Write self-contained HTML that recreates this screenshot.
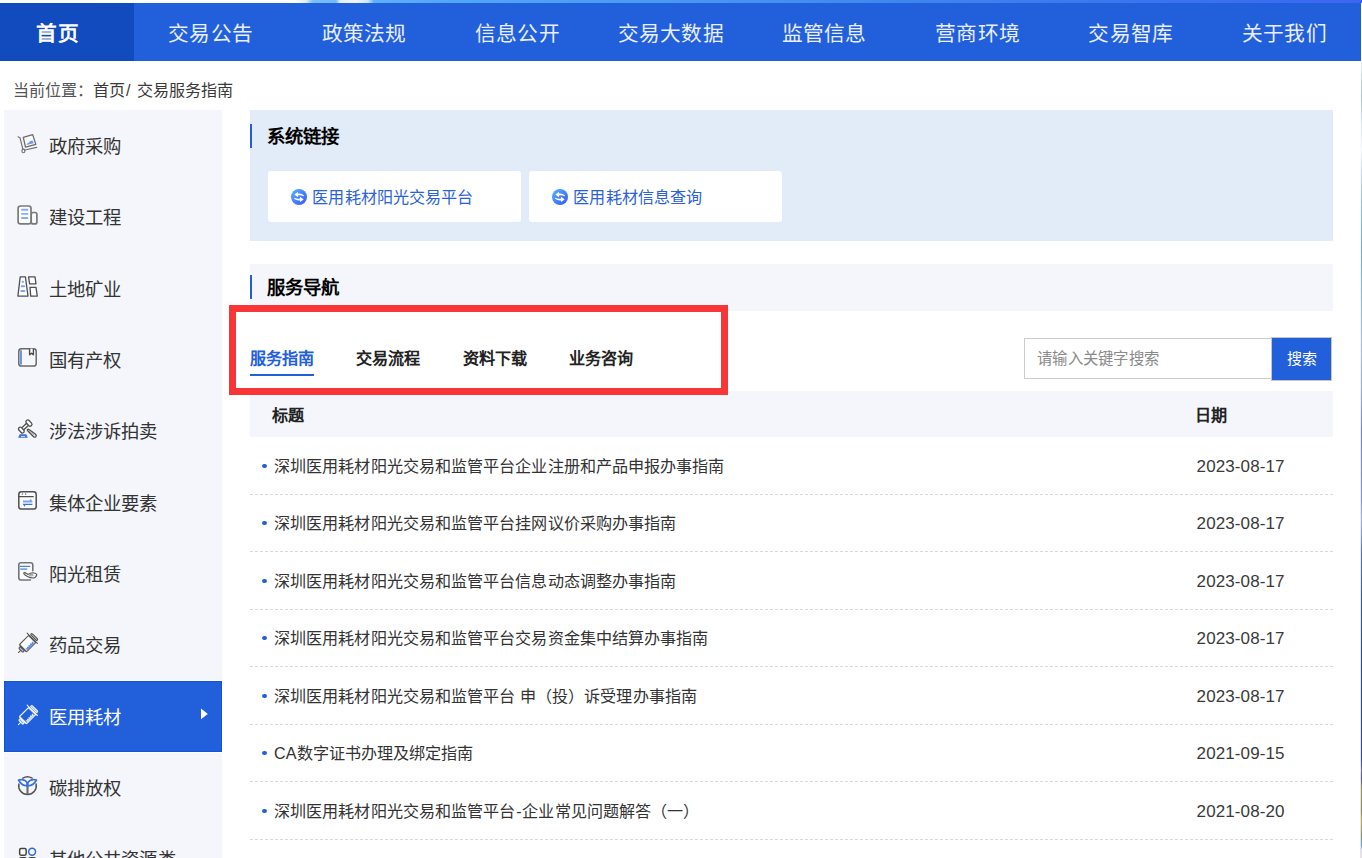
<!DOCTYPE html>
<html lang="zh-CN">
<head>
<meta charset="utf-8">
<title>交易服务指南</title>
<style>
*{box-sizing:border-box;margin:0;padding:0}
html,body{width:1362px;height:858px;overflow:hidden;background:#fff}
body{position:relative;font-family:"Liberation Sans",sans-serif;color:#333;-webkit-font-smoothing:antialiased}
.abs{position:absolute}
/* top banner sliver */
#strip{left:0;top:0;width:1362px;height:3px;background:linear-gradient(90deg,#fefeff 0,#fdfeff 294px,#dfedfd 306px,#7cbcfa 313px,#74b8fa 336px,#e4f0fe 340px,#eef6ff 356px,#cfe5fd 368px,#5cb0fc 374px,#52a6f6 450px,#4797f2 700px,#3f86ee 900px,#3a74ee 1150px,#3d66f0 1362px)}
/* right edge sliver */
#edge{left:1361px;top:61px;width:1px;height:797px;background:linear-gradient(180deg,#f2f5fc 0px,#c8d8f6 14px,#a8c4f4 39px,#dfe8fa 64px,#f4f6fd 89px,#c4d8f8 114px,#8ab8f4 149px,#6aa8f0 189px,#90b8f0 239px,#a8c0ec 289px,#90a4e0 339px,#7080d0 369px,#7484d0 389px,#8098d8 439px,#a0b8e8 459px,#5878c0 489px,#3458a0 539px,#284c90 589px,#2a4a8c 659px,#3c4a88 699px,#8078a0 709px,#5a5880 717px,#a09850 729px,#8c8848 749px,#c8b050 759px,#8c9060 774px,#60a0d0 784px,#e8d8e0 789px,#f0e0e0 797px)}
#edge2{left:1360px;top:61px;width:1px;height:797px;background:linear-gradient(180deg,#fff 0,#f3f6fc 30%,#e6ebf6 60%,#e0e4f0 100%)}
/* nav */
#nav{left:0;top:3px;width:1361px;height:58px;background:#2260db;display:flex}
#nav div{height:58px;line-height:61px;text-align:center;color:#e9effc;font-size:20.7px;width:153.375px;white-space:nowrap;letter-spacing:.25px}
#nav div.home{width:134px;background:#124bbd;font-weight:bold;color:#fff;padding-right:19px;line-height:62px}
/* breadcrumb */
#crumb{left:13px;top:79px;height:22px;line-height:22px;font-size:16.1px;color:#555;white-space:nowrap}
#crumb b{font-weight:normal;color:#3a3a3a}
#crumb u{text-decoration:none;display:inline-block;width:12px;text-align:left;padding-left:1px}
/* sidebar */
#side{left:4px;top:110px;width:218px;height:748px;background:#f4f6fb}
.si{position:absolute;left:0;width:218px;height:71.3px}
.si span{position:absolute;left:45px;top:0;height:71.3px;line-height:74px;font-size:18.35px;letter-spacing:.1px;color:#333;white-space:nowrap}
.si svg{position:absolute;left:8px;top:18px;width:32px;height:32px;overflow:visible}
.si.on{background:#2260db;box-shadow:inset 0 0 0 1px #1253d9,0 -1px 0 #fff,0 1px 0 #fff}
.si.on span{color:#fff}
/* panels */
#p1{left:250px;top:110px;width:1083px;height:130.5px;background:#e2ebf8}
#p2{left:250px;top:264px;width:1083px;height:47px;background:#f4f6fb}
.bar{position:absolute;left:0;width:2px;height:24px;background:#2260db}
.pt{position:absolute;left:17px;font-size:18.4px;font-weight:bold;color:#000;line-height:26px;white-space:nowrap}
.lk{position:absolute;top:61px;width:253px;height:51px;background:#fff;border-radius:3px}
.lk span{position:absolute;left:44.4px;top:0;line-height:53px;font-size:16.1px;letter-spacing:.09px;color:#2b62d9;white-space:nowrap}
.lk svg{position:absolute;left:23px;top:18px;width:16px;height:16px}
/* tabs */
.tab{position:absolute;top:346px;height:24px;line-height:24px;font-size:16.1px;font-weight:bold;color:#222;white-space:nowrap}
.tab.on{color:#2260db}
#ul{left:250px;top:374px;width:64px;height:2px;background:#2260db}
#red{left:229px;top:305px;width:499px;height:90px;border:7px solid #f83637}
/* search */
#inp{left:1024px;top:338px;width:249px;height:41px;border:1px solid #ccc;background:#fff;font-size:15.4px;color:#8a8a8a;line-height:39px;padding-left:12px;white-space:nowrap;letter-spacing:.25px}
#btn{left:1271px;top:337px;width:61px;height:44px;background:#2260db;border:1px solid #c9c6c0;color:#fff;font-size:15px;line-height:42px;text-align:center;white-space:nowrap}
/* table */
#th{left:250px;top:391px;width:1083px;height:46px;background:#f4f6fb}
#th span{position:absolute;top:0;line-height:48px;font-size:16.1px;font-weight:bold;color:#222}
.row{position:absolute;left:250px;width:1083px;height:58px}
.row::after{content:"";position:absolute;left:0;bottom:0;width:1083px;height:1px;background:repeating-linear-gradient(90deg,#d9d9d9 0,#d9d9d9 3px,transparent 3px,transparent 5px)}
.row i{position:absolute;left:12px;top:26.5px;width:5.2px;height:4.8px;border-radius:50%;background:#2260db}
.row span{position:absolute;left:24px;top:0;line-height:59px;font-size:16.1px;letter-spacing:.09px;color:#333;white-space:nowrap}
.row em{position:absolute;left:946.6px;top:0;line-height:59px;font-size:17px;font-style:normal;color:#3a3a3a;white-space:nowrap;letter-spacing:.1px}
.row span b{font-weight:normal;padding:0 .8px}
</style>
</head>
<body>
<div id="strip" class="abs"></div>
<div id="nav" class="abs"><div class="home">首页</div><div>交易公告</div><div>政策法规</div><div>信息公开</div><div>交易大数据</div><div>监管信息</div><div>营商环境</div><div>交易智库</div><div>关于我们</div></div>
<div id="edge2" class="abs"></div>
<div id="edge" class="abs"></div>
<div id="crumb" class="abs">当前位置：<b>首页<u>/</u>交易服务指南</b></div>
<div id="side" class="abs">
<div class="si" style="top:0.0px"><svg viewBox="0 0 32 32" ><g fill="none" stroke="#727272" stroke-width="1.2" stroke-linecap="round" stroke-linejoin="round"><path d="M6.1 8.8 L8 9.7 L10.9 21.3"/><ellipse cx="11.4" cy="22.9" rx="1.45" ry="1.85"/><path d="M13 22 L24.7 19.4"/><path d="M11.3 9.3 L20.7 6.6 L23.8 16.4 L13.5 19.2 Z" fill="#fbfcfe" stroke="#6a6a6a" stroke-width="1.3"/></g><path d="M14.3 17.1 L15.7 15 L17.3 14.6 L17.7 13.3 L20.6 12.4 L21.8 15.2 Z" fill="#6f9aeb"/></svg><span>政府采购</span></div>
<div class="si" style="top:71.3px"><svg viewBox="0 0 32 32" ><g fill="#fbfcfe" stroke="#7a7a7a" stroke-width="1.7" stroke-linejoin="round"><rect x="19.2" y="13.5" width="5.7" height="11.4" rx="2"/><rect x="6.1" y="7" width="12.9" height="17.9" rx="2.4"/></g><g stroke="#8caeee" stroke-width="1.9" stroke-linecap="round"><path d="M9.9 10.8H15.4M9.9 14.9H15.4M9.9 19H15.4"/></g></svg><span>建设工程</span></div>
<div class="si" style="top:142.6px"><svg viewBox="0 0 32 32" ><g fill="#fbfcfe" stroke="#505050" stroke-width="1.3" stroke-linejoin="round"><path d="M8.2 5.9 L13.4 5.9 L16 25.1 L5.9 25.1 Z"/><path d="M16.6 5.9 L23 5.9 L24 12.9 L17.6 12.9 Z"/><path d="M18 16.4 L24 16.4 L25.3 25.1 L18.7 25.1 Z"/></g><circle cx="10.8" cy="10.8" r="1.15" fill="#7fa3ec"/><g stroke="#7fa3ec" stroke-width="1.9" stroke-linecap="round"><path d="M9.6 15.3H12.2M9.4 20H12.4"/></g></svg><span>土地矿业</span></div>
<div class="si" style="top:213.9px"><svg viewBox="0 0 32 32" ><rect x="6.8" y="6.8" width="17.4" height="17.3" rx="2.6" fill="#fbfcfe" stroke="#686868" stroke-width="1.5"/><rect x="9.4" y="9.4" width="13" height="12.6" fill="#f4f6fb"/><rect x="8" y="8.2" width="2" height="14.4" fill="#6c95e9"/><path d="M17.6 6.8 V12.7 L19.5 11.2 L21.4 12.7 V6.8" fill="#fff" stroke="#4a4a4a" stroke-width="1.4" stroke-linejoin="round"/></svg><span>国有产权</span></div>
<div class="si" style="top:285.2px"><svg viewBox="0 0 32 32" ><g fill="#fbfcfe" stroke="#4f4f4f" stroke-width="1.3" stroke-linejoin="round" stroke-linecap="round"><g transform="translate(13.1 13.6) rotate(-43)"><rect x="-3.4" y="-1.45" width="6.8" height="2.9"/><rect x="-6.9" y="-3.3" width="3.5" height="6.6" rx="1.6"/><rect x="3.4" y="-3.5" width="3.7" height="7" rx="1.7"/></g><path d="M15.6 16.5 Q16.3 15.8 17 16.4 L23.6 21.3 Q24.9 22.8 23.8 23.8 Q22.7 24.7 21.3 23.5 L15.5 17.5 Q15.1 17 15.6 16.5 Z"/></g><path d="M16.8 17.5 L22.4 22.4" stroke="#8a8a8a" stroke-width="0.8" fill="none"/><path d="M7.7 21.3 H14.2 L15.9 24.8 H6.1 Z" fill="#3b6fe2"/><rect x="9" y="23" width="4" height="0.9" fill="#dfe8fb"/></svg><span>涉法涉诉拍卖</span></div>
<div class="si" style="top:356.5px"><svg viewBox="0 0 32 32" ><rect x="6.8" y="6.8" width="17.4" height="17.3" rx="2.6" fill="#fbfcfe" stroke="#4f4f4f" stroke-width="1.5"/><path d="M6.8 11.6 H21.2" stroke="#4f4f4f" stroke-width="1.4" stroke-linecap="round"/><circle cx="10.4" cy="9.1" r="0.75" fill="#666"/><circle cx="13.6" cy="9.1" r="0.75" fill="#666"/><path d="M11 15.5 H17.5 L18.5 13.8 L20.4 16.2 V17.4 H11 Z" fill="#7fa3ec"/><path d="M10.6 18.8 H20.4 V20 H13.4 L12.5 21.8 Z" fill="#3b6fe2"/></svg><span>集体企业要素</span></div>
<div class="si" style="top:427.8px"><svg viewBox="0 0 32 32" ><path d="M20.8 14.8 V9 Q20.8 6.8 18.6 6.8 H9 Q6.8 6.8 6.8 9 V21.8 Q6.8 24 9 24 H18.4" fill="#fbfcfe" stroke="#747474" stroke-width="1.6" stroke-linecap="round"/><path d="M8.3 10.4 H17.7" stroke="#4f80e6" stroke-width="1.2" stroke-linecap="round"/><path d="M8.9 13.1 H14.5" stroke="#7fa3ec" stroke-width="1.9" stroke-linecap="round"/><path d="M11.7 17 L12.9 16.4 L16.1 18.4 Q18.2 16.7 21 16.7 Q24 17 24.8 18.6 Q24 21.6 21.4 22 Q18 22 15.4 20.5 L12.4 18.6 Z" fill="#fbfcfe" stroke="#575757" stroke-width="1.15" stroke-linejoin="round"/><ellipse cx="19.2" cy="19.2" rx="2" ry="0.7" fill="none" stroke="#777" stroke-width="0.8"/></svg><span>阳光租赁</span></div>
<div class="si" style="top:499.1px"><svg viewBox="0 0 32 32" ><g transform="translate(16 16) rotate(-45)" fill="#fbfcfe" stroke="#525252" stroke-width="1.05" stroke-linejoin="round" stroke-linecap="round"><path d="M-13.5 0 H-10.4" /><rect x="-10.3" y="-3" width="2.3" height="6" rx="1.1" fill="#c4c4c4"/><path d="M-7.6 -4 V4" /><rect x="-7" y="-4.9" width="12.6" height="10.1"/><path d="M6.3 -7.6 V7"/><rect x="7.7" y="-4.3" width="1.9" height="8.8" rx="0.95" fill="#c4c4c4"/><path d="M-5.6 4.5 V2.2 Q-5 1.2 -4.4 3.4 Q-3.4 0.6 -2.4 3.4 Q-1.2 0.4 -0.2 3.4 Q1.2 0.2 2.2 3.4 Q3.4 0.8 4.2 2.4 V4.5 Z" fill="#5c8ae8" stroke="none"/></g></svg><span>药品交易</span></div>
<div class="si on" style="top:571px;height:71px"><svg viewBox="0 0 32 32" ><g transform="translate(16 16) rotate(-45)" fill="none" stroke="#eef3fe" stroke-width="1.15" stroke-linejoin="round" stroke-linecap="round"><path d="M-13.5 0 H-10.4" /><rect x="-10.3" y="-3" width="2.3" height="6" rx="1.1" fill="#8fb0ee"/><path d="M-7.6 -4 V4" /><rect x="-7" y="-4.9" width="12.6" height="10.1"/><path d="M6.3 -7.6 V7"/><rect x="7.7" y="-4.3" width="1.9" height="8.8" rx="0.95" fill="#8fb0ee"/><path d="M-5.6 4.5 V2.2 Q-5 1.2 -4.4 3.4 Q-3.4 0.6 -2.4 3.4 Q-1.2 0.4 -0.2 3.4 Q1.2 0.2 2.2 3.4 Q3.4 0.8 4.2 2.4 V4.5 Z" fill="#dbe6fc" stroke="none"/></g></svg><span>医用耗材</span></div>
<div class="si" style="top:641.7px"><svg viewBox="0 0 32 32" ><g fill="none" stroke="#555" stroke-width="1.5" stroke-linecap="round"><path d="M10.9 8.1 A8.8 8.8 0 0 1 20.1 8.1"/><path d="M6.9 13.9 A8.8 8.8 0 1 0 24.1 13.9"/></g><path d="M15.5 16 V24.2" stroke="#6a6a6a" stroke-width="2.1"/><g fill="#f9fafd" stroke="#3b6fe2" stroke-width="1.7" stroke-linejoin="round"><path d="M15.5 15.7 Q10 16.2 6.5 10 Q12.6 8.5 15.5 13.1 Z"/><path d="M15.5 15.7 Q21 16.2 24.5 10 Q18.4 8.5 15.5 13.1 Z"/></g><path d="M15.5 12.9 V16.6" stroke="#3b6fe2" stroke-width="2.3"/></svg><span>碳排放权</span></div>
<div class="si" style="top:713.0px"><svg viewBox="0 0 32 32" ><rect x="7.65" y="7.55" width="6.5" height="6.6" rx="1.4" fill="#fbfcfe" stroke="#444" stroke-width="1.5"/><circle cx="20.1" cy="10.7" r="3.45" fill="none" stroke="#2f66e0" stroke-width="1.5"/><rect x="7.65" y="16.75" width="6.5" height="6.6" rx="1.4" fill="#fbfcfe" stroke="#444" stroke-width="1.5"/><rect x="16.85" y="16.75" width="6.5" height="6.6" rx="1.4" fill="#fbfcfe" stroke="#444" stroke-width="1.5"/></svg><span>其他公共资源类</span></div>
</div>
<div id="p1" class="abs">
  <div class="bar" style="top:14px"></div>
  <div class="pt" style="top:14px">系统链接</div>
  <div class="lk" style="left:18px"><svg viewBox="0 0 16 16"><defs><linearGradient id="lg" x1="0.1" y1="0.1" x2="0.9" y2="0.9"><stop offset="0" stop-color="#55aafb"/><stop offset="1" stop-color="#3a5ff8"/></linearGradient></defs><circle cx="8" cy="8" r="8" fill="url(#lg)"/><path d="M3.3 5.6 L7 2.9 V4.6 Q11 4.3 13.1 6.6 L12.4 7.2 Q10.5 6 7 6.4 V8.3 Z M12.7 10.4 L9 13.1 V11.4 Q5 11.7 2.9 9.4 L3.6 8.8 Q5.5 10 9 9.6 V7.7 Z" fill="#fff"/></svg><span>医用耗材阳光交易平台</span></div>
  <div class="lk" style="left:279px"><svg viewBox="0 0 16 16"><defs><linearGradient id="lg2" x1="0.1" y1="0.1" x2="0.9" y2="0.9"><stop offset="0" stop-color="#55aafb"/><stop offset="1" stop-color="#3a5ff8"/></linearGradient></defs><circle cx="8" cy="8" r="8" fill="url(#lg2)"/><path d="M3.3 5.6 L7 2.9 V4.6 Q11 4.3 13.1 6.6 L12.4 7.2 Q10.5 6 7 6.4 V8.3 Z M12.7 10.4 L9 13.1 V11.4 Q5 11.7 2.9 9.4 L3.6 8.8 Q5.5 10 9 9.6 V7.7 Z" fill="#fff"/></svg><span>医用耗材信息查询</span></div>
</div>
<div id="p2" class="abs">
  <div class="bar" style="top:11px"></div>
  <div class="pt" style="top:11px">服务导航</div>
</div>
<div class="tab on" style="left:250px">服务指南</div>
<div class="tab" style="left:356px">交易流程</div>
<div class="tab" style="left:463px">资料下载</div>
<div class="tab" style="left:569px">业务咨询</div>
<div id="ul" class="abs"></div>
<div id="inp" class="abs">请输入关键字搜索</div>
<div id="btn" class="abs">搜索</div>
<div id="th" class="abs"><span style="left:22px">标题</span><span style="left:945px">日期</span></div>
<div class="row" style="top:437px"><i></i><span>深圳医用耗材阳光交易和监管平台企业注册和产品申报办事指南</span><em>2023-08-17</em></div>
<div class="row" style="top:494px"><i></i><span>深圳医用耗材阳光交易和监管平台挂网议价采购办事指南</span><em>2023-08-17</em></div>
<div class="row" style="top:552px"><i></i><span>深圳医用耗材阳光交易和监管平台信息动态调整办事指南</span><em>2023-08-17</em></div>
<div class="row" style="top:609px"><i></i><span>深圳医用耗材阳光交易和监管平台交易资金集中结算办事指南</span><em>2023-08-17</em></div>
<div class="row" style="top:667px"><i></i><span>深圳医用耗材阳光交易和监管平台 申（投）诉受理办事指南</span><em>2023-08-17</em></div>
<div class="row" style="top:724px"><i></i><span>CA数字证书办理及绑定指南</span><em>2021-09-15</em></div>
<div class="row" style="top:782px"><i></i><span>深圳医用耗材阳光交易和监管平台<b>-</b>企业常见问题解答（一）</span><em>2021-08-20</em></div>
<svg class="abs" style="left:196px;top:704px;width:16px;height:20px" viewBox="0 0 16 20"><path d="M5 4.6 L11.8 10 L5 15.3 Z" fill="#fff"/></svg>
<div id="red" class="abs"></div>
</body>
</html>
